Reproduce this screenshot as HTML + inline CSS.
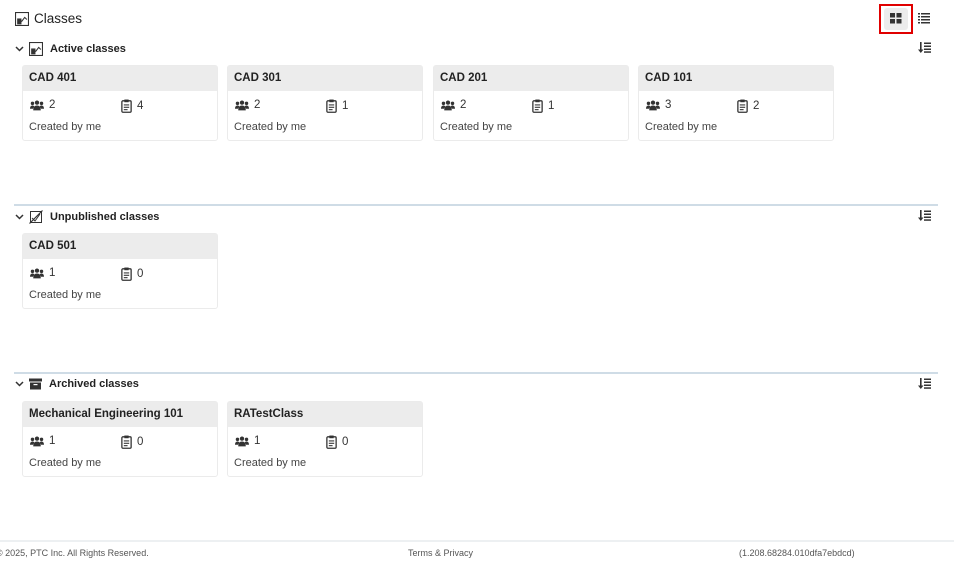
<!DOCTYPE html>
<html><head><meta charset="utf-8"><style>
*{box-sizing:border-box;margin:0;padding:0}
body{width:954px;height:562px;background:#fff;font-family:"Liberation Sans",sans-serif;color:#222;position:relative;overflow:hidden}
.abs{position:absolute}
.title{left:15px;top:11px;font-size:13.5px;display:flex;align-items:center;gap:5px;font-weight:500}
.sec{left:15px;display:flex;align-items:center;font-size:11px;font-weight:bold;color:#222}
.sec .chev{width:9px;margin-right:5px}
.sec svg.ic{margin-right:7px}
.line{left:14px;width:924px;height:2px;background:#cfdce6}
.card{position:absolute;width:196px;height:76px;border:1px solid #ebebeb;border-radius:3px;background:#fff}
.card .h{height:25px;background:#ececec;font-size:11.5px;font-weight:bold;padding:6px 0 0 6px;color:#222}
.card .r{position:absolute;top:33px;font-size:11.5px;display:flex;align-items:center;gap:5px;color:#333}
.card .c{position:absolute;top:55px;left:6px;font-size:11px;color:#444}
.sort{left:918px}
.foot{top:540px;left:0;width:954px;height:22px;border-top:2px solid #edf0f2;font-size:9px;color:#555}
</style></head><body>

<div class="abs title"><svg width="14" height="14" viewBox="0 0 13 13"><rect x="0.5" y="0.5" width="12" height="12" fill="none" stroke="#333"/><rect x="2" y="6" width="4" height="5.5" fill="#333"/><path d="M6 9l3-4 2 2" stroke="#333" fill="none"/></svg><span>Classes</span></div>

<div class="abs" style="left:879px;top:4px;width:34px;height:30px;border:2px solid #e00000"></div>
<div class="abs" style="left:884px;top:8px;width:24px;height:22px;background:#ececec;border-radius:3px"></div>
<svg class="abs" style="left:890px;top:13px" width="12" height="11" viewBox="0 0 12 11"><rect x="0" y="0" width="5" height="4.5" fill="#333"/><rect x="6.5" y="0" width="5" height="4.5" fill="#333"/><rect x="0" y="6" width="5" height="4.5" fill="#333"/><rect x="6.5" y="6" width="5" height="4.5" fill="#333"/></svg>
<svg class="abs" style="left:918px;top:13px" width="12" height="11" viewBox="0 0 12 11" fill="#333"><rect x="0" y="0" width="2" height="1.5"/><rect x="3" y="0" width="9" height="1.5"/><rect x="0" y="3" width="2" height="1.5"/><rect x="3" y="3" width="9" height="1.5"/><rect x="0" y="6" width="2" height="1.5"/><rect x="3" y="6" width="9" height="1.5"/><rect x="0" y="9" width="2" height="1.5"/><rect x="3" y="9" width="9" height="1.5"/></svg>

<div class="abs sec" style="top:42px"><svg class="chev" viewBox="0 0 9 6" height="6"><path d="M1 1l3.5 3.5L8 1" stroke="#333" stroke-width="1.5" fill="none"/></svg><svg class="ic" width="14" height="14" viewBox="0 0 13 13"><rect x="0.5" y="0.5" width="12" height="12" fill="none" stroke="#333"/><rect x="2" y="6" width="4" height="5.5" fill="#333"/><path d="M6 9l3-4 2 2" stroke="#333" fill="none"/></svg><span>Active classes</span></div>
<div class="abs line" style="top:204px"></div>
<div class="abs sec" style="top:210px"><svg class="chev" viewBox="0 0 9 6" height="6"><path d="M1 1l3.5 3.5L8 1" stroke="#333" stroke-width="1.5" fill="none"/></svg><svg class="ic" width="14" height="14" viewBox="0 0 14 14"><rect x="1.5" y="1.5" width="11" height="11" fill="none" stroke="#333"/><path d="M3 8l3 3 5-7" stroke="#333" fill="none"/><path d="M0.5 13.5L13.5 0.5" stroke="#333" stroke-width="1.2"/></svg><span>Unpublished classes</span></div>
<div class="abs line" style="top:372px"></div>
<div class="abs sec" style="top:378px"><svg class="chev" viewBox="0 0 9 6" height="6"><path d="M1 1l3.5 3.5L8 1" stroke="#333" stroke-width="1.5" fill="none"/></svg><svg class="ic" width="13" height="12" viewBox="0 0 13 12"><rect x="0" y="0.5" width="13" height="3" fill="#333"/><rect x="1" y="4.5" width="11" height="7" fill="#333"/><rect x="4.5" y="6" width="4" height="1.2" fill="#fff"/></svg><span>Archived classes</span></div>

<svg class="abs sort" style="top:42px" width="13" height="11" viewBox="0 0 13 11" fill="#333"><path d="M2 0h1.6v7.5H5.5L2.8 11 0 7.5h2z"/><rect x="6" y="0.5" width="7" height="1.5"/><rect x="6" y="3.5" width="7" height="1.5"/><rect x="6" y="6.5" width="7" height="1.5"/><rect x="6" y="9.3" width="7" height="1.5"/></svg>
<svg class="abs sort" style="top:210px" width="13" height="11" viewBox="0 0 13 11" fill="#333"><path d="M2 0h1.6v7.5H5.5L2.8 11 0 7.5h2z"/><rect x="6" y="0.5" width="7" height="1.5"/><rect x="6" y="3.5" width="7" height="1.5"/><rect x="6" y="6.5" width="7" height="1.5"/><rect x="6" y="9.3" width="7" height="1.5"/></svg>
<svg class="abs sort" style="top:378px" width="13" height="11" viewBox="0 0 13 11" fill="#333"><path d="M2 0h1.6v7.5H5.5L2.8 11 0 7.5h2z"/><rect x="6" y="0.5" width="7" height="1.5"/><rect x="6" y="3.5" width="7" height="1.5"/><rect x="6" y="6.5" width="7" height="1.5"/><rect x="6" y="9.3" width="7" height="1.5"/></svg>

<svg width="0" height="0" style="position:absolute"><defs>
<symbol id="u" viewBox="0 0 13 10"><circle cx="6.5" cy="2.3" r="2" fill="#333"/><circle cx="2.3" cy="3" r="1.6" fill="#333"/><circle cx="10.7" cy="3" r="1.6" fill="#333"/><path d="M3 9.5c0-3 1.5-4.5 3.5-4.5s3.5 1.5 3.5 4.5z" fill="#333"/><path d="M0 8c0-2 1-3 2.3-3s1.5.5 1.8 1L2.8 8z" fill="#333"/><path d="M13 8c0-2-1-3-2.3-3s-1.5.5-1.8 1l1.3 2z" fill="#333"/></symbol>
<symbol id="cb" viewBox="0 0 10 13"><rect x="0.7" y="1.7" width="8.6" height="10.6" rx="1" fill="none" stroke="#333" stroke-width="1.2"/><rect x="3" y="0.5" width="4" height="2.5" fill="#333"/><rect x="2.5" y="5" width="5" height="1" fill="#333"/><rect x="2.5" y="7.2" width="5" height="1" fill="#333"/><rect x="2.5" y="9.4" width="3.5" height="1" fill="#333"/></symbol>
</defs></svg>

<div class="card" style="left:22px;top:65px"><div class="h">CAD 401</div><div class="r" style="left:7px"><svg width="14" height="11"><use href="#u"/></svg>2</div><div class="r" style="left:98px"><svg width="11" height="14"><use href="#cb"/></svg>4</div><div class="c">Created by me</div></div>
<div class="card" style="left:227px;top:65px"><div class="h">CAD 301</div><div class="r" style="left:7px"><svg width="14" height="11"><use href="#u"/></svg>2</div><div class="r" style="left:98px"><svg width="11" height="14"><use href="#cb"/></svg>1</div><div class="c">Created by me</div></div>
<div class="card" style="left:433px;top:65px"><div class="h">CAD 201</div><div class="r" style="left:7px"><svg width="14" height="11"><use href="#u"/></svg>2</div><div class="r" style="left:98px"><svg width="11" height="14"><use href="#cb"/></svg>1</div><div class="c">Created by me</div></div>
<div class="card" style="left:638px;top:65px"><div class="h">CAD 101</div><div class="r" style="left:7px"><svg width="14" height="11"><use href="#u"/></svg>3</div><div class="r" style="left:98px"><svg width="11" height="14"><use href="#cb"/></svg>2</div><div class="c">Created by me</div></div>

<div class="card" style="left:22px;top:233px"><div class="h">CAD 501</div><div class="r" style="left:7px"><svg width="14" height="11"><use href="#u"/></svg>1</div><div class="r" style="left:98px"><svg width="11" height="14"><use href="#cb"/></svg>0</div><div class="c">Created by me</div></div>

<div class="card" style="left:22px;top:401px"><div class="h">Mechanical Engineering 101</div><div class="r" style="left:7px"><svg width="14" height="11"><use href="#u"/></svg>1</div><div class="r" style="left:98px"><svg width="11" height="14"><use href="#cb"/></svg>0</div><div class="c">Created by me</div></div>
<div class="card" style="left:227px;top:401px"><div class="h">RATestClass</div><div class="r" style="left:7px"><svg width="14" height="11"><use href="#u"/></svg>1</div><div class="r" style="left:98px"><svg width="11" height="14"><use href="#cb"/></svg>0</div><div class="c">Created by me</div></div>

<div class="abs foot">
<span class="abs" style="left:-4px;top:6px">© 2025, PTC Inc. All Rights Reserved.</span>
<span class="abs" style="left:408px;top:6px">Terms &amp; Privacy</span>
<span class="abs" style="left:739px;top:6px">(1.208.68284.010dfa7ebdcd)</span>
</div>
</body></html>
